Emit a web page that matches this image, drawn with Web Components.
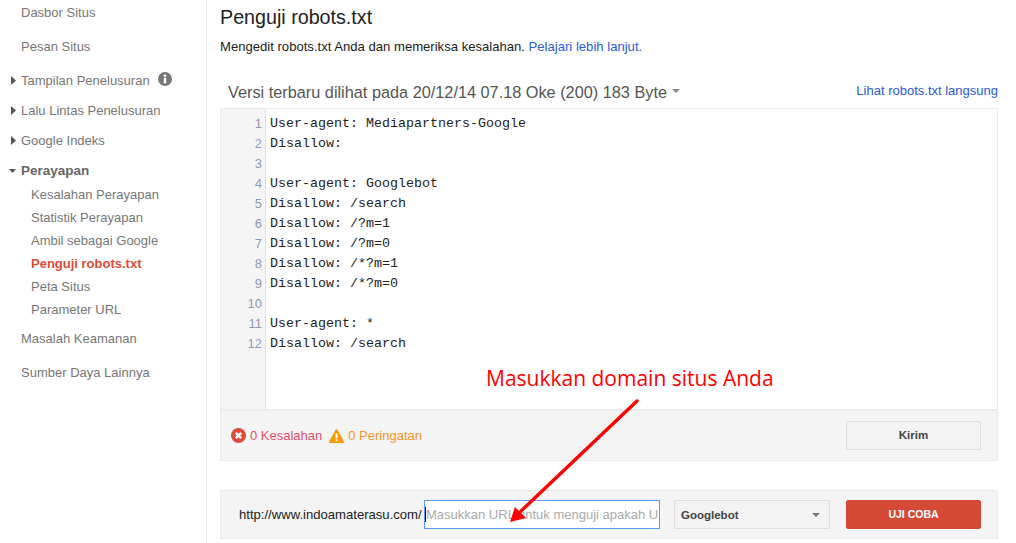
<!DOCTYPE html>
<html lang="id">
<head>
<meta charset="utf-8">
<title>Penguji robots.txt</title>
<style>
  html, body { margin: 0; height: 100%; background: #fff; }
  body { font: 13px "Liberation Sans", Arial, sans-serif; overflow: hidden; }
</style>
</head>
<body>
<app-shell>
  <side-nav slot="nav">
    <nav-item gap="2">Dasbor Situs</nav-item>
    <nav-item gap="14">Pesan Situs</nav-item>
    <nav-item gap="14" arrow="right" info>Tampilan Penelusuran</nav-item>
    <nav-item gap="10" arrow="right">Lalu Lintas Penelusuran</nav-item>
    <nav-item gap="10" arrow="right">Google Indeks</nav-item>
    <nav-item gap="10" arrow="down" bold>Perayapan</nav-item>
    <nav-sub style="margin-top:3px">Kesalahan Perayapan</nav-sub>
    <nav-sub>Statistik Perayapan</nav-sub>
    <nav-sub>Ambil sebagai Google</nav-sub>
    <nav-sub active>Penguji robots.txt</nav-sub>
    <nav-sub>Peta Situs</nav-sub>
    <nav-sub>Parameter URL</nav-sub>
    <nav-item gap="7">Masalah Keamanan</nav-item>
    <nav-item gap="14">Sumber Daya Lainnya</nav-item>
  </side-nav>
  <page-head heading="Penguji robots.txt">
    Mengedit robots.txt Anda dan memeriksa kesalahan. <a href="#">Pelajari lebih lanjut.</a>
  </page-head>
  <version-bar link="Lihat robots.txt langsung">Versi terbaru dilihat pada 20/12/14 07.18 Oke (200) 183 Byte</version-bar>
  <robots-editor></robots-editor>
  <status-bar></status-bar>
  <test-bar></test-bar>
  <call-out></call-out>
</app-shell>

<script>
  class AppShell extends HTMLElement {
    constructor() {
      super();
      this.attachShadow({ mode: "open" });
      this.shadowRoot.innerHTML = `
        <style>
          :host { display: flex; width: 1016px; height: 543px; position: relative; overflow: hidden; }
          .nav { width: 206px; flex: none; border-right: 1px solid #e5e5e5; }
          main { flex: none; width: 778px; margin-left: 13px; }
        </style>
        <div class="nav"><slot name="nav"></slot></div>
        <main><slot></slot></main>
      `;
    }
  }

  class SideNav extends HTMLElement {
    constructor() {
      super();
      this.attachShadow({ mode: "open" });
      this.shadowRoot.innerHTML = `
        <style>
          :host { display: block; color: #777; font-size: 13px; }
        </style>
        <slot></slot>
      `;
    }
  }

  class NavItem extends HTMLElement {
    constructor() {
      super();
      this.attachShadow({ mode: "open" });
    }

    connectedCallback() {
      const arrow = this.getAttribute("arrow");
      let arrowSvg = "";
      if (arrow === "right") {
        arrowSvg = `<svg class="arrow" width="5" height="9" viewBox="0 0 5 9"><path d="M0 0 L5 4.5 L0 9Z" fill="#555"/></svg>`;
      } else if (arrow === "down") {
        arrowSvg = `<svg class="arrow down" width="7" height="4" viewBox="0 0 7 4"><path d="M0 0 L7 0 L3.5 4Z" fill="#555"/></svg>`;
      }
      const info = this.hasAttribute("info")
        ? `<svg class="info" width="14" height="14" viewBox="0 0 14 14"><circle cx="7" cy="7" r="7" fill="#777"/><rect x="5.8" y="2.6" width="2.4" height="2.2" fill="#fff"/><rect x="5.8" y="5.8" width="2.4" height="5.6" fill="#fff"/></svg>`
        : "";
      this.shadowRoot.innerHTML = `
        <style>
          :host {
            display: flex;
            align-items: center;
            height: 20px;
            padding-left: 21px;
            margin-top: ${this.getAttribute("gap") || 0}px;
            position: relative;
            white-space: nowrap;
          }
          :host([bold]) { font-weight: bold; font-size: 13.5px; color: #666; }
          .arrow { position: absolute; left: 11px; top: 6px; }
          .arrow.down { left: 9px; top: 9px; }
          .info { margin-left: 8px; margin-top: -2px; }
        </style>
        ${arrowSvg}<span><slot></slot></span>${info}
      `;
    }
  }

  class NavSub extends HTMLElement {
    constructor() {
      super();
      this.attachShadow({ mode: "open" });
      this.shadowRoot.innerHTML = `
        <style>
          :host { display: block; height: 23px; line-height: 23px; padding-left: 31px; white-space: nowrap; }
          :host([active]) { color: #dd4b39; font-weight: bold; }
        </style>
        <slot></slot>
      `;
    }
  }

  class PageHead extends HTMLElement {
    constructor() {
      super();
      this.attachShadow({ mode: "open" });
    }

    connectedCallback() {
      this.shadowRoot.innerHTML = `
        <style>
          :host { display: block; color: #222; }
          h1 { margin: 0; padding-top: 5px; font-size: 19.7px; font-weight: normal; line-height: 24px; }
          p { margin: 9px 0 0; font-size: 13.1px; line-height: 18px; }
          ::slotted(a) { color: #2a5bd7; text-decoration: none; }
        </style>
        <h1>${this.getAttribute("heading")}</h1>
        <p><slot></slot></p>
      `;
    }
  }

  class VersionBar extends HTMLElement {
    constructor() {
      super();
      this.attachShadow({ mode: "open" });
    }

    connectedCallback() {
      this.shadowRoot.innerHTML = `
        <style>
          :host { display: flex; align-items: center; justify-content: space-between; height: 24px; margin-top: 23px; padding: 1px 0 4px 8px; }
          .ver { font-size: 16.3px; color: #555; display: flex; align-items: center; white-space: nowrap; }
          .caret { width: 0; height: 0; margin: 0 0 3px 5px; border: 4px solid transparent; border-top-color: #888; border-bottom: 0; }
          a { color: #2a5bd7; text-decoration: none; font-size: 13px; margin-top: -4px; }
        </style>
        <div class="ver"><span><slot></slot></span><i class="caret"></i></div>
        <a href="#">${this.getAttribute("link")}</a>
      `;
    }
  }

  const ROBOTS_LINES = [
    "User-agent: Mediapartners-Google",
    "Disallow:",
    "",
    "User-agent: Googlebot",
    "Disallow: /search",
    "Disallow: /?m=1",
    "Disallow: /?m=0",
    "Disallow: /*?m=1",
    "Disallow: /*?m=0",
    "",
    "User-agent: *",
    "Disallow: /search",
  ];

  class RobotsEditor extends HTMLElement {
    constructor() {
      super();
      this.attachShadow({ mode: "open" });
    }

    connectedCallback() {
      const rows = ROBOTS_LINES.map((line, i) => `<div class="n">${i + 1}</div><div class="c">${line || "&nbsp;"}</div>`).join("");
      this.shadowRoot.innerHTML = `
        <style>
          :host { display: block; height: 301px; box-sizing: border-box; border: 1px solid #ebebeb; border-bottom: 0; background: #fff; }
          .grid { display: grid; grid-template-columns: 44px 1fr; height: 100%; position: relative; align-content: start; }
          .gutter { position: absolute; left: 0; top: 0; bottom: 0; width: 44px; background: #f5f5f5; border-right: 1px solid #e0e0e0; }
          .n, .c { position: relative; height: 20px; line-height: 20px; }
          .n { color: #8c9bb5; font: 13px/20px "Liberation Sans", Arial, sans-serif; text-align: right; padding-right: 3px; box-sizing: border-box; }
          .c { padding-left: 5px; font: 13.33px/20px "Liberation Mono", "Courier New", monospace; color: #222; white-space: pre; }
          .pad { height: 5px; grid-column: 1 / 3; }
        </style>
        <div class="grid">
          <div class="gutter"></div>
          <div class="pad"></div>
          ${rows}
        </div>
      `;
    }
  }

  class StatusBar extends HTMLElement {
    constructor() {
      super();
      this.attachShadow({ mode: "open" });
      this.shadowRoot.innerHTML = `
        <style>
          :host { display: flex; align-items: center; height: 52px; box-sizing: border-box; border: 1px solid #ebebeb; border-top-width: 2px; background: #f4f4f4; padding: 0 16px 0 10px; font-size: 13px; }
          .err { display: flex; align-items: center; color: #e0506a; }
          .warn { display: flex; align-items: center; color: #f4942c; margin-left: 7px; }
          svg { margin-right: 4px; }
          button { margin-left: auto; width: 135px; height: 29px; border: 1px solid #dcdcdc; border-radius: 2px; background: #f3f3f3; color: #444; font: bold 11.5px "Liberation Sans", Arial, sans-serif; padding: 0 0 2px; }
        </style>
        <div class="err">
          <svg width="15" height="15" viewBox="0 0 15 15"><circle cx="7.5" cy="7.5" r="7.5" fill="#dd4b39"/><path d="M4.8 4.8 L10.2 10.2 M10.2 4.8 L4.8 10.2" stroke="#fff" stroke-width="2.4"/></svg>
          0 Kesalahan
        </div>
        <div class="warn">
          <svg width="15" height="14" viewBox="0 0 15 14"><path d="M7.5 1.2 L14 13 L1 13Z" fill="#f90" stroke="#f90" stroke-width="2" stroke-linejoin="round"/><rect x="6.5" y="4.2" width="2" height="5" fill="#fff"/><rect x="6.5" y="10.2" width="2" height="2" fill="#fff"/></svg>
          0 Peringatan
        </div>
        <button>Kirim</button>
      `;
    }
  }

  class TestBar extends HTMLElement {
    constructor() {
      super();
      this.attachShadow({ mode: "open" });
      this.shadowRoot.innerHTML = `
        <style>
          :host { display: flex; align-items: center; height: 49px; box-sizing: border-box; margin-top: 29px; border: 1px solid #ebebeb; background: #f4f4f4; padding: 0 16px 0 18px; font-size: 13px; }
          .prefix { color: #222; white-space: nowrap; width: 185px; flex: none; font-size: 13.1px; }
          .url { width: 236px; height: 29px; box-sizing: border-box; flex: none; display: flex; align-items: center; border: 1px solid #5a9bff; background: #fff; overflow: hidden; white-space: nowrap; color: #aaa; font-size: 13px; }
          .cursor { width: 1px; height: 15px; background: #000; flex: none; }
          .robot { width: 156px; height: 29px; box-sizing: border-box; flex: none; margin-left: 14px; display: flex; align-items: center; justify-content: space-between; padding: 0 9px 0 6px; border: 1px solid #dcdcdc; border-radius: 2px; background: #f3f3f3; color: #444; font-weight: bold; font-size: 11.5px; }
          .tri { width: 0; height: 0; border: 4px solid transparent; border-top-color: #777; border-bottom: 0; }
          .go { margin-left: auto; width: 135px; height: 29px; border: 1px solid #d14836; border-radius: 2px; background: #d64937; color: #fff; font: bold 10.5px "Liberation Sans", Arial, sans-serif; padding: 0 0 2px; }
        </style>
        <div class="prefix">http://www.indoamaterasu.com/</div>
        <div class="url"><i class="cursor"></i><span>Masukkan URL untuk menguji apakah U</span></div>
        <div class="robot"><span>Googlebot</span><i class="tri"></i></div>
        <button class="go">UJI COBA</button>
      `;
    }
  }

  // the red annotation pasted over the page
  class CallOut extends HTMLElement {
    constructor() {
      super();
      this.attachShadow({ mode: "open" });
      this.shadowRoot.innerHTML = `
        <style>
          :host { position: absolute; left: 0; top: 0; width: 1016px; height: 543px; pointer-events: none; display: block; }
          .note { position: absolute; left: 486px; top: 364px; font: 21px/28px "Open Sans", sans-serif; color: #f00; white-space: nowrap; }
          svg { position: absolute; left: 0; top: 0; }
        </style>
        <div class="note">Masukkan domain situs Anda</div>
        <svg width="1016" height="543" viewBox="0 0 1016 543">
          <path d="M637 401 L520 512" stroke="#f00" stroke-width="3.4" stroke-linecap="round" fill="none"/>
          <path d="M510 522 L515 507 L526 518Z" fill="#f00"/>
        </svg>
      `;
    }
  }

  customElements.define("app-shell", AppShell);
  customElements.define("side-nav", SideNav);
  customElements.define("nav-item", NavItem);
  customElements.define("nav-sub", NavSub);
  customElements.define("page-head", PageHead);
  customElements.define("version-bar", VersionBar);
  customElements.define("robots-editor", RobotsEditor);
  customElements.define("status-bar", StatusBar);
  customElements.define("test-bar", TestBar);
  customElements.define("call-out", CallOut);
</script>
</body>
</html>
